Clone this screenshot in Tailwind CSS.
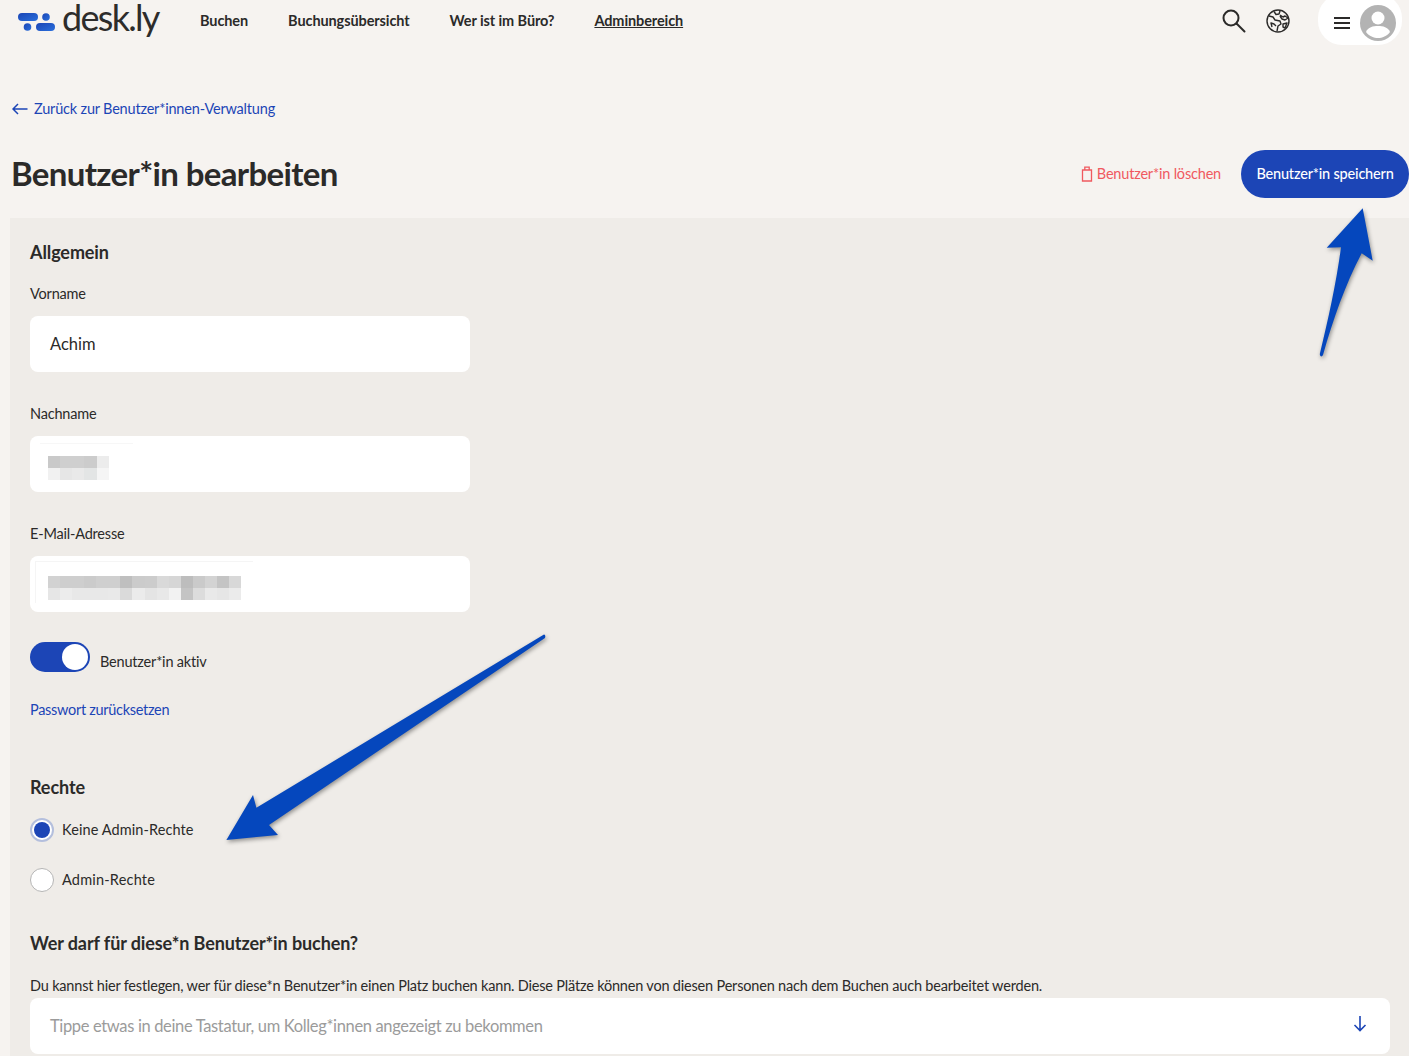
<!DOCTYPE html>
<html lang="de">
<head>
    <meta charset="UTF-8">
    <meta name="viewport" content="width=device-width, initial-scale=1.0">
    <title>desk.ly - Benutzer*in bearbeiten</title>
    <script src="https://cdn.jsdelivr.net/npm/@tailwindcss/browser@4"></script>
</head>
<body class="bg-[#f6f3f0] text-[#2b2a29] font-['Lato',sans-serif] text-[14.5px] tracking-[-0.19px]">
<div class="relative h-[1056px] w-[1409px] overflow-hidden">

    <!-- top nav -->
    <header class="flex h-[42px] items-center pl-[18px] pr-[7px]">
        <svg class="w-[38px] h-[20px] shrink-0" viewBox="0 0 38 20">
            <defs>
                <linearGradient id="logo" x1="0" y1="0" x2="1" y2="1">
                    <stop offset="0" stop-color="#1b45b5"/>
                    <stop offset="1" stop-color="#2a6fdc"/>
                </linearGradient>
            </defs>
            <rect x="0" y="2" width="20" height="8" rx="4" fill="url(#logo)"/>
            <circle cx="28" cy="6" r="3.8" fill="url(#logo)"/>
            <circle cx="9.5" cy="16" r="3.8" fill="url(#logo)"/>
            <rect x="18" y="12" width="19" height="8" rx="4" fill="url(#logo)"/>
        </svg>
        <span class="ml-[6px] mt-[3px] w-[98px] self-start whitespace-nowrap text-[36px] leading-[29px] tracking-[-1.7px] text-[#2d2c2b]">desk.ly</span>
        <nav class="ml-[40px] mt-[-1px] flex gap-[40px] font-bold tracking-[-0.1px]">
            <a>Buchen</a>
            <a>Buchungsübersicht</a>
            <a>Wer ist im Büro?</a>
            <a class="underline">Adminbereich</a>
        </nav>
        <div class="ml-auto flex items-center">
            <svg class="w-[26px] h-[26px]" viewBox="0 0 26 26" fill="none" stroke="#2b2a29" stroke-width="2">
                <circle cx="10" cy="10" r="7.5"/>
                <path d="M15.5 15.5l8 8" stroke-linecap="round"/>
            </svg>
            <svg class="ml-[18px] w-[26px] h-[26px]" viewBox="0 0 26 26" fill="none" stroke="#2b2a29" stroke-width="1.4">
                <circle cx="13" cy="13" r="11"/>
                <path d="M9 3.5l2 3 3-.5 1-3M4 8l4 1 2 3 5 1 1 3-3 2-1 5M7 19l-1-4 3 1 2 2M15 7l3 2 2-1 3 2-3 2-3-1-2-3M18 16l4-1-2 5-2-1z" stroke-linejoin="round"/>
            </svg>
            <div class="ml-[27px] mt-[-3px] flex h-[51px] w-[84px] items-center rounded-[24px] bg-white pl-[16px] pt-[6px]">
                <svg class="w-[16px] h-[14px]" viewBox="0 0 16 14" stroke="#2b2a29" stroke-width="2"><path d="M0 2h16M0 7h16M0 12h16"/></svg>
                <svg class="ml-[10px] w-[36px] h-[36px]" viewBox="0 0 36 36">
                    <circle cx="18" cy="18" r="18" fill="#b3b3b3"/>
                    <circle cx="18" cy="13" r="6.5" fill="#fff"/>
                    <path d="M6 27c2-5 7-6 12-6s10 1 12 6c-3 4-8 6-12 6s-9-2-12-6z" fill="#fff"/>
                </svg>
            </div>
        </div>
    </header>

    <a class="mt-[56px] ml-[12px] flex items-center gap-[6px] text-[#1c45b6]">
        <svg class="w-[16px] h-[12px]" viewBox="0 0 16 12" fill="none" stroke="#1c45b6" stroke-width="1.5"><path d="M15.5 6H1M6 1L1 6l5 5"/></svg>
        Zurück zur Benutzer*innen-Verwaltung
    </a>

    <!-- title row -->
    <div class="mt-[30px] flex h-[48px] items-center pl-[11px]">
        <h1 class="text-[33px] font-bold leading-none tracking-[-0.65px] text-[#2b2a29]">Benutzer*in bearbeiten</h1>
        <a class="ml-auto flex items-center gap-[4px] text-[#f0595f]">
            <svg class="w-[12px] h-[16px]" viewBox="0 0 12 16" fill="none" stroke="#f0595f" stroke-width="1.3"><path d="M1.5 4h9v11h-9zM3.8 4V1.2h4.4V4"/></svg>
            Benutzer*in löschen
        </a>
        <button class="ml-[20px] h-[48px] w-[168px] rounded-[24px] bg-[#1c45b6] text-white font-medium">Benutzer*in speichern</button>
    </div>

    <!-- form panel -->
    <main class="ml-[10px] mt-[20px] h-[900px] bg-[#efecE8] px-[20px] pt-[22px]">
        <h2 class="text-[18px] font-bold leading-[24px] tracking-[-0.1px]">Allgemein</h2>
        <label class="mt-[20px] block leading-[20px]">Vorname</label>
        <div class="mt-[12px] flex h-[56px] w-[440px] items-center rounded-[8px] bg-white px-[20px] pt-[2px] text-[16.5px] tracking-normal">Achim</div>

        <label class="mt-[32px] block leading-[20px]">Nachname</label>
        <div class="mt-[12px] h-[56px] w-[440px] rounded-[8px] bg-white pl-[10px] pt-[7px]">
            <div class="h-[42px] w-[93px] border-t border-[#f7f7f7] pl-[8px] pt-[12px]">
                <div class="grid w-[61px] grid-cols-[12px_12px_12px_13px_12px] grid-rows-[12px_12px]">
                    <i class="bg-[#c9c9c9]"></i><i class="bg-[#cfcfcf]"></i><i class="bg-[#cfcfcf]"></i><i class="bg-[#cccccc]"></i><i class="bg-[#ececec]"></i>
                    <i class="bg-[#f1f1f1]"></i><i class="bg-[#e6e6e6]"></i><i class="bg-[#e9e9e9]"></i><i class="bg-[#e3e5e5]"></i><i class="bg-[#f5f5f5]"></i>
                </div>
            </div>
        </div>

        <label class="mt-[32px] block leading-[20px]">E-Mail-Adresse</label>
        <div class="mt-[12px] h-[56px] w-[440px] rounded-[8px] bg-white pl-[5px] pt-[5px]">
            <div class="h-[42px] w-[218px] border-l border-t border-[#f5f5f5] pl-[12px] pt-[14px]">
                <div class="grid w-[193px] grid-cols-[repeat(16,1fr)] grid-rows-[12px_12px]">
                    <i class="bg-[#d2d2d2]"></i><i class="bg-[#cecece]"></i><i class="bg-[#cecece]"></i><i class="bg-[#cbcbcb]"></i><i class="bg-[#cfcfcf]"></i><i class="bg-[#cfcfcf]"></i><i class="bg-[#bfbfbf]"></i><i class="bg-[#cbcbcb]"></i><i class="bg-[#cccccc]"></i><i class="bg-[#d9d9d9]"></i><i class="bg-[#d6d6d6]"></i><i class="bg-[#bdbdbd]"></i><i class="bg-[#cacaca]"></i><i class="bg-[#d3d3d3]"></i><i class="bg-[#c4c4c4]"></i><i class="bg-[#d8d8d8]"></i>
                    <i class="bg-[#e6e6e6]"></i><i class="bg-[#ececec]"></i><i class="bg-[#e8e8e8]"></i><i class="bg-[#e8e8e8]"></i><i class="bg-[#e8e8e8]"></i><i class="bg-[#e9e9e9]"></i><i class="bg-[#dadada]"></i><i class="bg-[#ebebeb]"></i><i class="bg-[#e4e4e4]"></i><i class="bg-[#e8e8e8]"></i><i class="bg-[#f2f2f2]"></i><i class="bg-[#c4c4c4]"></i><i class="bg-[#dcdcdc]"></i><i class="bg-[#e9e9e9]"></i><i class="bg-[#e6e6e6]"></i><i class="bg-[#ebebeb]"></i>
                </div>
            </div>
        </div>

        <div class="mt-[30px] flex h-[30px] items-center">
            <div class="flex h-[30px] w-[60px] items-center justify-end rounded-full bg-[#1c45b6] pr-[2px]">
                <div class="h-[26px] w-[26px] rounded-full bg-white"></div>
            </div>
            <span class="ml-[10px] mt-[10px]">Benutzer*in aktiv</span>
        </div>
        <a class="mt-[28px] block leading-[20px] tracking-[-0.3px] text-[#1c45b6]">Passwort zurücksetzen</a>

        <h2 class="mt-[55px] text-[18px] font-bold leading-[24px] tracking-[-0.1px]">Rechte</h2>
        <div class="mt-[19px] flex h-[24px] items-center gap-[8px] tracking-[0.1px]">
            <span class="flex h-[24px] w-[24px] items-center justify-center rounded-full border-2 border-[#b4bfdd] bg-white">
                <span class="h-[16px] w-[16px] rounded-full bg-[#1c45b6]"></span>
            </span>
            Keine Admin-Rechte
        </div>
        <div class="mt-[26px] flex h-[24px] items-center gap-[8px] tracking-[0.2px]">
            <span class="h-[24px] w-[24px] rounded-full border border-[#b5b5b5] bg-white"></span>
            Admin-Rechte
        </div>

        <h2 class="mt-[39px] text-[18px] font-bold leading-[24px] tracking-[-0.1px]">Wer darf für diese*n Benutzer*in buchen?</h2>
        <p class="mt-[21px] leading-[20px]">Du kannst hier festlegen, wer für diese*n Benutzer*in einen Platz buchen kann. Diese Plätze können von diesen Personen nach dem Buchen auch bearbeitet werden.</p>
        <div class="mt-[2px] flex h-[56px] w-[1360px] items-center justify-between rounded-[8px] bg-white px-[20px] pt-[1px] text-[16.5px] tracking-[-0.35px] text-[#9b9b9b]">
            Tippe etwas in deine Tastatur, um Kolleg*innen angezeigt zu bekommen
            <svg class="w-[14px] h-[16px] mr-[3px] mt-[-4px]" viewBox="0 0 14 16" fill="none" stroke="#1c45b6" stroke-width="1.6"><path d="M7 0v14M1.5 9L7 14.5 12.5 9"/></svg>
        </div>
    </main>

    <!-- annotation arrows -->
    <svg class="absolute left-0 top-0 pointer-events-none drop-shadow-[1px_2px_2px_rgba(0,0,0,0.4)]" width="1409" height="1056" viewBox="0 0 1409 1056">
        <path d="M1362.7 208.3L1326.7 247.7L1341 247.3C1336 285 1328 320 1319.8 354C1320 357 1322 357 1323 355C1333 320 1345 285 1361.7 253.3L1372.7 260.7Z" fill="#0547bd"/>
        <path d="M226.4 840L253 795L256.4 807.7L544 634.5Q546 635 545 638L269 825L278 835Z" fill="#0547bd"/>
    </svg>
</div>
</body>
</html>
